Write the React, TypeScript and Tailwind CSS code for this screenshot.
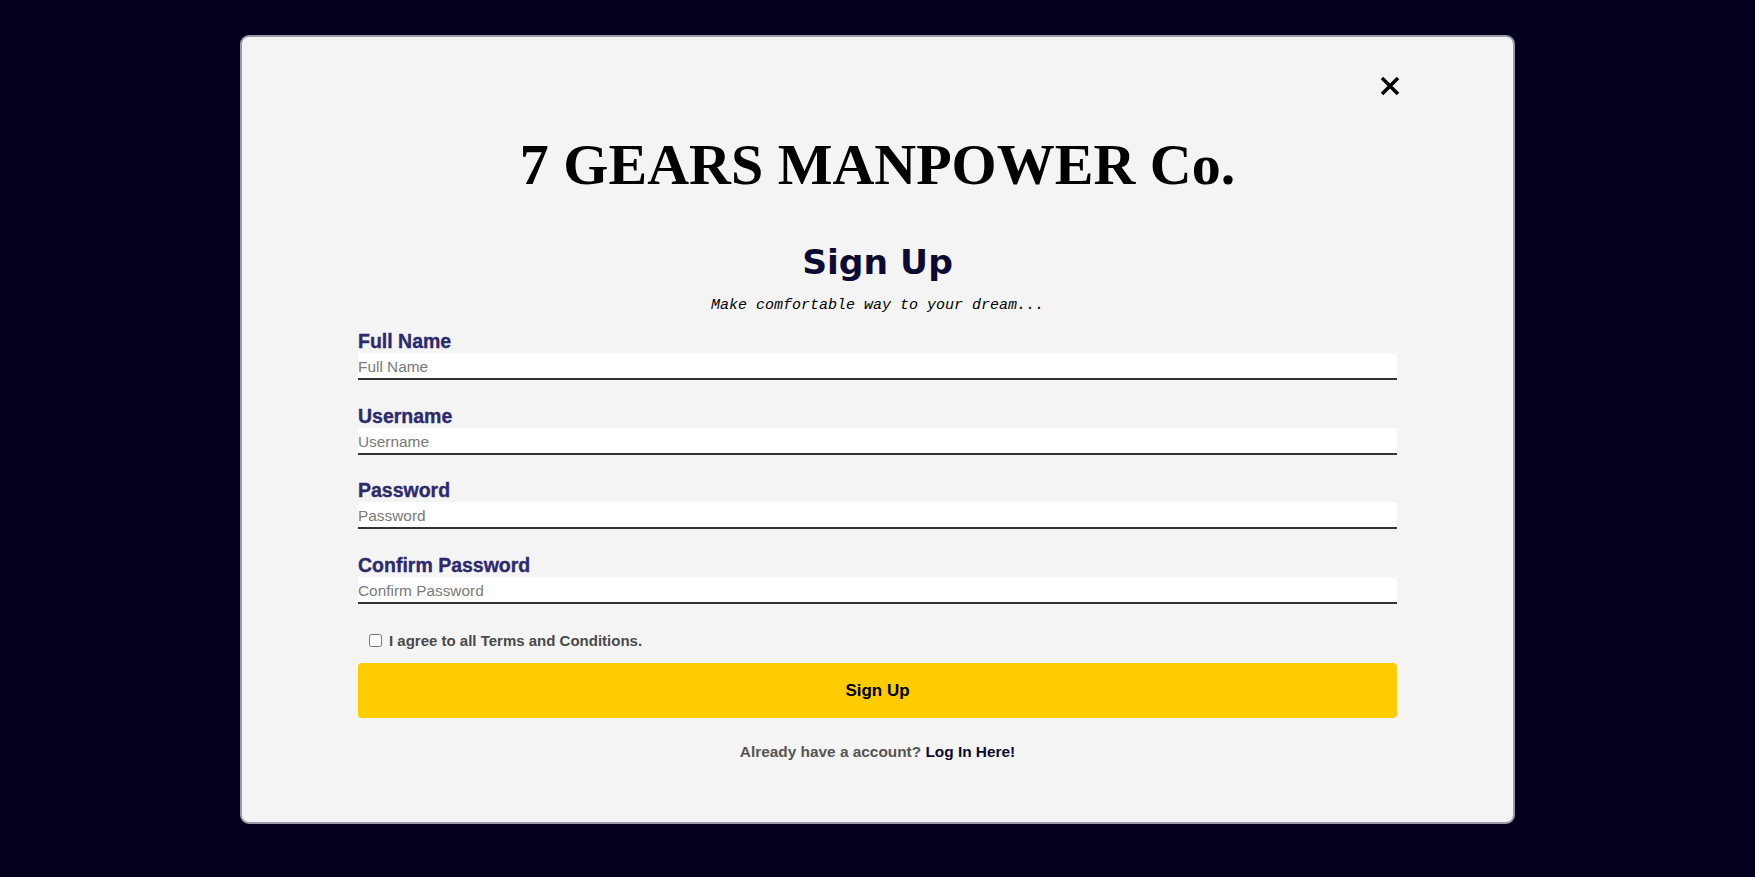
import { useState } from "react";

const fields = [
  { id: "fullname", label: "Full Name", type: "text" },
  { id: "username", label: "Username", type: "text" },
  { id: "password", label: "Password", type: "password" },
  { id: "confirm", label: "Confirm Password", type: "password" },
];

export default function App() {
  const [agree, setAgree] = useState(false);

  return (
    <div className="min-h-screen w-full bg-[#03001e] pt-[35px] font-['Liberation_Sans',Arial,sans-serif]">
      <div className="relative mx-auto h-[789px] w-[1275px] rounded-[9px] border-2 border-[#9b9ba6] bg-[#f4f4f4] px-[116px] pt-[95px]">
        <button
          type="button"
          aria-label="Close"
          className="absolute right-[113px] top-[39px] text-black"
        >
          <svg width="20" height="20" viewBox="0 0 20 20">
            <path d="M2 2 18 18M18 2 2 18" stroke="currentColor" strokeWidth="3.5" />
          </svg>
        </button>

        <h1 className="text-center font-['Liberation_Serif','Times_New_Roman',serif] text-[58px] font-bold leading-[66px] text-black">
          7 GEARS MANPOWER Co.
        </h1>

        <h2 className="mt-[44px] text-center font-['DejaVu_Sans',Verdana,sans-serif] text-[34.5px] font-bold leading-[40px] text-[#0c0a30]">
          Sign Up
        </h2>
        <p className="mt-[15px] text-center font-['Liberation_Mono','Courier_New',monospace] text-[15px] italic leading-[17px] text-black">
          Make comfortable way to your dream...
        </p>

        <form className="mt-[16px]" onSubmit={(e) => e.preventDefault()}>
          {fields.map((f) => (
            <div key={f.id} className="mb-[24.5px]">
              <label
                htmlFor={f.id}
                className="block text-[19.5px] font-bold leading-[22px] text-[#2d2a6c] [-webkit-text-stroke:0.35px_#2d2a6c]"
              >
                {f.label}
              </label>
              <input
                id={f.id}
                type={f.type}
                placeholder={f.label}
                className="mt-[1px] block h-[27px] w-full border-b-2 border-[#333333] bg-white px-0 pt-[3px] text-[15.4px] text-black outline-none placeholder:text-[#7a7a7a]"
              />
            </div>
          ))}

          <label className="flex items-center pl-[11px] pt-[3px] text-[15px] font-bold leading-[19px] text-[#4a4a4a]">
            <input
              type="checkbox"
              checked={agree}
              onChange={(e) => setAgree(e.target.checked)}
              className="m-0 h-[13px] w-[13px]"
            />
            <span className="ml-[7px]">I agree to all Terms and Conditions.</span>
          </label>

          <button
            type="submit"
            className="mt-[13px] block h-[55px] w-full rounded-[4px] bg-[#ffcc00] text-[17px] font-bold text-black"
          >
            Sign Up
          </button>
        </form>

        <p className="mt-[25px] text-center text-[15.4px] font-bold leading-[18px] text-[#555555]">
          Already have a account? <a href="#" className="text-[#0c0a2e]">Log In Here!</a>
        </p>
      </div>
    </div>
  );
}
